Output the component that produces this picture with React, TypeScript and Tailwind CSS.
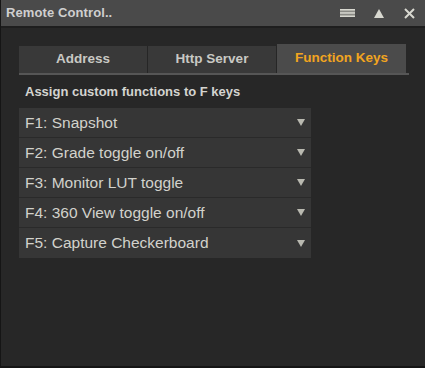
const tabs = ["Address", "Http Server", "Function Keys"];

const keys = [
  "F1: Snapshot",
  "F2: Grade toggle on/off",
  "F3: Monitor LUT toggle",
  "F4: 360 View toggle on/off",
  "F5: Capture Checkerboard",
];

export default function App() {
  const active = 2;

  return (
    <div
      className="w-[425px] h-[368px] bg-[#272727] flex flex-col border-l border-b-2 border-[#151515] overflow-hidden"
      style={{ fontFamily: '"Liberation Sans", Arial, sans-serif' }}
    >
      {/* Title bar */}
      <div className="h-[28px] shrink-0 bg-[#4a4a4a] border-b-2 border-[#1e1e1e] flex items-center pl-[5px] pr-[10px]">
        <span className="text-[13px] font-bold text-[#cfcfcf] tracking-[0.1px]">Remote Control..</span>
        <div className="ml-auto flex items-center">
          <svg width="15" height="8" viewBox="0 0 15 8" className="mr-[19px]">
            <rect x="0" y="0" width="15" height="8" fill="#8a8a85" />
            <rect x="0" y="0" width="15" height="1.5" fill="#d8d8d0" />
            <rect x="0" y="3.2" width="15" height="1.5" fill="#d8d8d0" />
            <rect x="0" y="6.5" width="15" height="1.5" fill="#d8d8d0" />
          </svg>
          <svg width="10" height="9" viewBox="0 0 10 9" className="mr-[20px]">
            <polygon points="5,0 10,9 0,9" fill="#d8d8d0" />
          </svg>
          <svg width="11" height="11" viewBox="0 0 11 11">
            <path d="M1 1 L10 10 M10 1 L1 10" stroke="#d8d8d0" strokeWidth="2" />
          </svg>
        </div>
      </div>

      {/* Tabs */}
      <div className="pl-[18px] pt-[16px] w-[408px]">
        <div className="flex items-end border-b-2 border-[#565656]">
          {tabs.map((t, i) => (
            <div
              key={t}
              className={
                i === active
                  ? "w-[129px] h-[29px] bg-[#4b4b4b] flex items-center justify-center text-[13.5px] font-bold text-[#f2a51f]"
                  : "w-[129px] h-[27px] bg-[#393939] border-r border-[#262626] flex items-center justify-center text-[13.5px] font-bold text-[#c9c9c4]"
              }
            >
              {t}
            </div>
          ))}
        </div>
      </div>

      {/* Content */}
      <div className="pl-[18px] pt-[9px]">
        <div className="pl-[6px] text-[13px] font-bold text-[#d4d4d0] leading-[16px]">
          Assign custom functions to F keys
        </div>
        <div className="mt-[8px] w-[292px] flex flex-col">
          {keys.map((k, i) => (
            <div
              key={k}
              className={
                "h-[30px] bg-[#363636] flex items-center pl-[6px] pr-[6px] " +
                (i < keys.length - 1 ? "border-b border-[#2a2a2a]" : "")
              }
            >
              <span className="text-[15.5px] text-[#d2d2cc]">{k}</span>
              <svg width="8" height="7" viewBox="0 0 8 7" className="ml-auto">
                <polygon points="0,0 8,0 4,7" fill="#b9b9b0" />
              </svg>
            </div>
          ))}
        </div>
      </div>
    </div>
  );
}
